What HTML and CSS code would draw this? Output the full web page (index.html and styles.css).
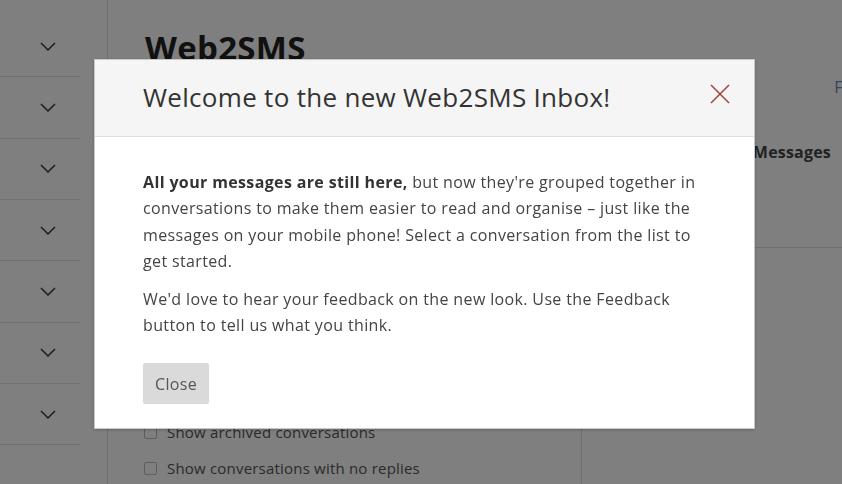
FILE: index.html
```html
<!DOCTYPE html>
<html lang="en">
<head>
<meta charset="utf-8">
<title>Web2SMS Inbox</title>
<link rel="stylesheet" href="styles.css">
</head>
<body>
<div class="app">
  <aside class="sidebar">
    <div class="nav-row"><svg class="chev" viewBox="0 0 16 9"><path d="M1 1l7 7 7-7"/></svg></div>
    <div class="nav-row"><svg class="chev" viewBox="0 0 16 9"><path d="M1 1l7 7 7-7"/></svg></div>
    <div class="nav-row"><svg class="chev" viewBox="0 0 16 9"><path d="M1 1l7 7 7-7"/></svg></div>
    <div class="nav-row"><svg class="chev" viewBox="0 0 16 9"><path d="M1 1l7 7 7-7"/></svg></div>
    <div class="nav-row"><svg class="chev" viewBox="0 0 16 9"><path d="M1 1l7 7 7-7"/></svg></div>
    <div class="nav-row"><svg class="chev" viewBox="0 0 16 9"><path d="M1 1l7 7 7-7"/></svg></div>
    <div class="nav-row"><svg class="chev" viewBox="0 0 16 9"><path d="M1 1l7 7 7-7"/></svg></div>
  </aside>
  <main class="main">
    <header class="page-head">
      <div class="head-top">
        <h1 class="page-title">Web2SMS</h1>
        <a class="feedback-link" href="#">Feedback</a>
      </div>
      <nav class="tabs">
        <span class="tab">Send</span>
        <span class="tab">Contacts</span>
        <span class="tab tab-active">Messages</span>
      </nav>
    </header>
    <section class="inbox">
      <div class="list-col">
        <div class="filters">
          <label class="filter"><span class="box"></span>Show archived conversations</label>
          <label class="filter"><span class="box"></span>Show conversations with no replies</label>
        </div>
      </div>
      <div class="thread-col"></div>
    </section>
  </main>
</div>

<div class="overlay"></div>

<div class="modal" role="dialog">
  <div class="modal-head">
    <h2 class="modal-title">Welcome to the new Web2SMS Inbox!</h2>
    <button class="modal-x" aria-label="Close">
      <svg viewBox="0 0 20 20"><path d="M1 1L19 19M19 1L1 19"/></svg>
    </button>
  </div>
  <div class="modal-body">
    <p><strong>All your messages are still here,</strong> but now they're grouped together in conversations to make them easier to read and organise – just like the messages on your mobile phone! Select a conversation from the list to get started.</p>
    <p>We'd love to hear your feedback on the new look. Use the Feedback button to tell us what you think.</p>
    <button class="btn-close">Close</button>
  </div>
</div>
</body>
</html>
```

FILE: styles.css
```css
* { box-sizing: border-box; }

html, body {
  margin: 0;
  padding: 0;
  height: 100%;
  overflow: hidden;
  background: #fff;
  font-family: "Open Sans", "Liberation Sans", sans-serif;
  color: #333;
}

.app {
  display: flex;
  height: 484px;
}

/* sidebar */
.sidebar {
  width: 108px;
  flex: none;
  border-right: 1px solid #dcdcdc;
  padding-top: 16px;
}

.nav-row {
  width: 80px;
  height: 61.33px;
  border-bottom: 1px solid #e2e2e2;
  display: flex;
  align-items: center;
  padding-left: 40px;
}

.chev {
  width: 16px;
  height: 9px;
  fill: none;
  stroke: #3a3a3a;
  stroke-width: 1.5;
}

/* main */
.main {
  flex: 1;
  display: flex;
  flex-direction: column;
  min-width: 0;
}

.page-head {
  height: 248px;
  border-bottom: 1px solid #dcdcdc;
  padding-left: 37px;
  display: flex;
  flex-direction: column;
}

.head-top {
  display: flex;
  justify-content: space-between;
  align-items: flex-start;
  padding-top: 26px;
}

.page-title {
  margin: 0;
  font-size: 33px;
  font-weight: 700;
  color: #222;
  line-height: 44px;
  letter-spacing: 0.3px;
}

.feedback-link {
  margin-top: 50px;
  margin-right: -63px;
  font-size: 16px;
  color: #6b89b5;
  text-decoration: none;
}

.tabs {
  margin-top: 43px;
  display: flex;
  justify-content: flex-end;
  gap: 40px;
  padding-right: 11px;
}

.tab {
  font-size: 16px;
  font-weight: 700;
  color: #555;
  letter-spacing: 0.2px;
}

.tab-active { color: #444; }

.inbox {
  flex: 1;
  display: flex;
}

.list-col {
  width: 474px;
  border-right: 1px solid #dcdcdc;
  display: flex;
  flex-direction: column;
  justify-content: flex-end;
  padding: 0 0 5px 36px;
}

.filters {
  display: flex;
  flex-direction: column;
  gap: 14px;
}

.filter {
  display: flex;
  align-items: center;
  gap: 10px;
  font-size: 15px;
  color: #555;
  line-height: 22px;
  letter-spacing: 0.2px;
}

.box {
  width: 13px;
  height: 13px;
  border: 1px solid #bbb;
  border-radius: 2px;
  background: #fff;
}

.thread-col { flex: 1; }

/* overlay + modal */
.overlay {
  position: fixed;
  inset: 0;
  background: rgba(0, 0, 0, 0.5);
}

.modal {
  position: fixed;
  left: 94px;
  top: 59px;
  width: 661px;
  height: 370px;
  background: #fff;
  border: 1px solid #c8c8c8;
  box-shadow: 0 1px 3px rgba(0, 0, 0, 0.2);
  display: flex;
  flex-direction: column;
}

.modal-head {
  height: 77px;
  background: #f5f5f5;
  border-bottom: 1px solid #dedede;
  display: flex;
  align-items: center;
  justify-content: space-between;
  padding: 0 24px 3px 48px;
}

.modal-title {
  margin: 0;
  font-size: 26px;
  font-weight: 400;
  color: #333;
  letter-spacing: 0.3px;
}

.modal-x {
  background: none;
  border: 0;
  padding: 0;
  width: 20px;
  height: 20px;
  margin-bottom: 5px;
  cursor: pointer;
}

.modal-x svg {
  width: 20px;
  height: 20px;
  fill: none;
  stroke: #a0403f;
  stroke-width: 1.5;
  display: block;
}

.modal-body {
  padding: 32px 48px 0 48px;
}

.modal-body p {
  margin: 0 0 11px 0;
  font-size: 16px;
  line-height: 26.4px;
  color: #444;
  letter-spacing: 0.36px;
}

.modal-body strong { color: #333; }

.btn-close {
  margin-top: 14px;
  height: 41px;
  padding: 0 12px;
  border: 0;
  border-radius: 2px;
  background: #dadada;
  font-family: inherit;
  font-size: 16px;
  color: #555;
  letter-spacing: 0.36px;
}
```
